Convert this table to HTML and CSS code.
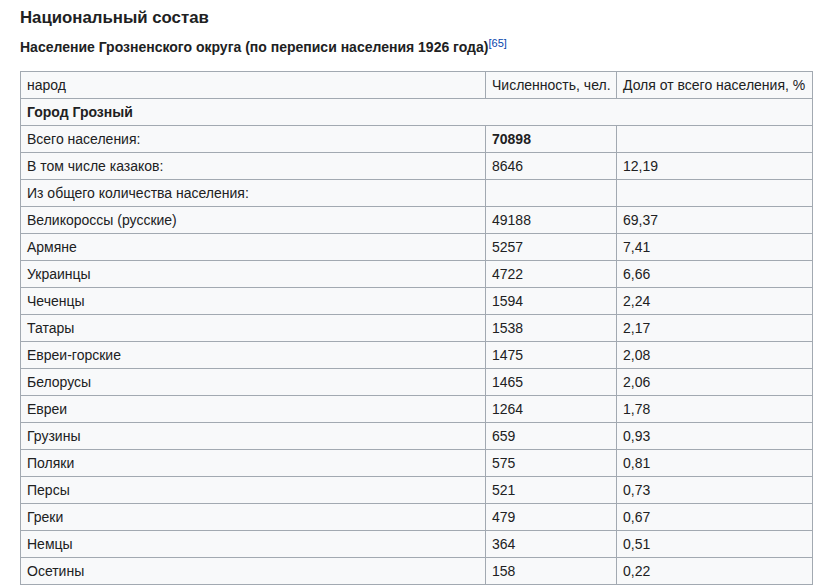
FILE: index.html
```html
<!DOCTYPE html>
<html lang="ru">
<head>
<meta charset="utf-8">
<link rel="stylesheet" href="styles.css">
</head>
<body>
<div class="content">
  <h3 class="section-title">Национальный состав</h3>
  <h4 class="table-title">Население Грозненского округа (по переписи населения 1926 года)<sup class="ref">[65]</sup></h4>
  <table class="wikitable">
    <colgroup><col class="c1"><col class="c2"><col class="c3"></colgroup>
    <tr><td>народ</td><td>Численность, чел.</td><td>Доля от всего населения, %</td></tr>
    <tr><td colspan="3" class="b">Город Грозный</td></tr>
    <tr><td>Всего населения:</td><td class="b">70898</td><td></td></tr>
    <tr><td>В том числе казаков:</td><td>8646</td><td>12,19</td></tr>
    <tr><td>Из общего количества населения:</td><td></td><td></td></tr>
    <tr><td>Великороссы (русские)</td><td>49188</td><td>69,37</td></tr>
    <tr><td>Армяне</td><td>5257</td><td>7,41</td></tr>
    <tr><td>Украинцы</td><td>4722</td><td>6,66</td></tr>
    <tr><td>Чеченцы</td><td>1594</td><td>2,24</td></tr>
    <tr><td>Татары</td><td>1538</td><td>2,17</td></tr>
    <tr><td>Евреи-горские</td><td>1475</td><td>2,08</td></tr>
    <tr><td>Белорусы</td><td>1465</td><td>2,06</td></tr>
    <tr><td>Евреи</td><td>1264</td><td>1,78</td></tr>
    <tr><td>Грузины</td><td>659</td><td>0,93</td></tr>
    <tr><td>Поляки</td><td>575</td><td>0,81</td></tr>
    <tr><td>Персы</td><td>521</td><td>0,73</td></tr>
    <tr><td>Греки</td><td>479</td><td>0,67</td></tr>
    <tr><td>Немцы</td><td>364</td><td>0,51</td></tr>
    <tr><td>Осетины</td><td>158</td><td>0,22</td></tr>
  </table>
</div>
</body>
</html>
```
FILE: styles.css
```css
html, body {
  margin: 0;
  padding: 0;
  background: #ffffff;
}
body {
  font-family: "Liberation Sans", Arial, sans-serif;
  color: #202122;
  font-size: 14px;
}
.content {
  padding: 8px 8px 0 20px;
}
.section-title {
  margin: 0;
  font-size: 16.8px;
  font-weight: bold;
  line-height: 20px;
}
.table-title {
  margin: 9px 0 0 0;
  font-size: 14px;
  font-weight: bold;
  line-height: 20px;
}
.ref {
  font-weight: normal;
  font-size: 11px;
  color: #0645ad;
  line-height: 1;
  vertical-align: 5px;
}
.wikitable {
  margin-top: 14px;
  width: 792px;
  border-collapse: collapse;
  background: #f8f9fa;
  border: 1px solid #a2a9b1;
  table-layout: fixed;
}
.c1 { width: 465px; }
.c2 { width: 131px; }
.c3 { width: 196px; }
.wikitable td {
  border: 1px solid #a2a9b1;
  padding: 0 6px;
  height: 26px;
  line-height: 20px;
  font-size: 14px;
  vertical-align: middle;
  white-space: nowrap;
}
.b { font-weight: bold; }
```
